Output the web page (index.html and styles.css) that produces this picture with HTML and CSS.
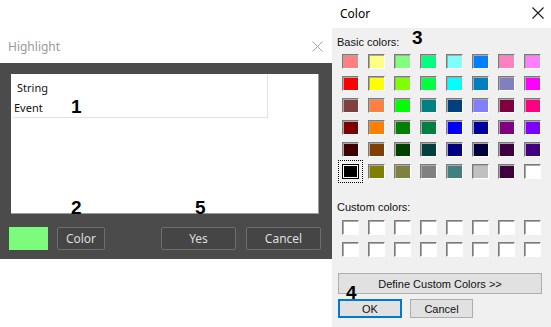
FILE: index.html
```html
<!DOCTYPE html>
<html lang="en">
<head>
  <meta charset="UTF-8" />
  <title>Highlight and Color</title>
  <link rel="stylesheet" href="styles.css">
</head>
<body>

  <div class="highlight">
    <div class="hl-title">
      <span>Highlight</span>
      <svg class="close" width="11" height="11" viewBox="0 0 11 11">
        <path d="M0.5 0.5 L10.5 10.5 M10.5 0.5 L0.5 10.5" stroke="#a4a4a4" stroke-width="1" fill="none"/>
      </svg>
    </div>
    <div class="hl-body">
      <div class="list">
        <div class="list-inner">
          <div class="row row-string">String</div>
          <div class="row">Event</div>
        </div>
      </div>
      <div class="hl-actions">
        <div class="current-color"></div>
        <button class="dark-btn color-btn">Color</button>
        <div class="spacer"></div>
        <button class="dark-btn wide">Yes</button>
        <button class="dark-btn wide">Cancel</button>
      </div>
    </div>
  </div>

  <div class="color-dialog">
    <div class="cd-title">
      <span>Color</span>
      <svg class="close-dark" width="12" height="12" viewBox="0 0 12 12">
        <path d="M0.5 0.5 L11.5 11.5 M11.5 0.5 L0.5 11.5" stroke="#1a1a1a" stroke-width="1.1" fill="none"/>
      </svg>
    </div>
    <div class="cd-body">
      <div class="label">Basic colors:</div>
      <div class="swatches" id="basic"></div>
      <div class="label custom-label">Custom colors:</div>
      <div class="swatches custom" id="custom"></div>
      <button class="win-btn define-btn">Define Custom Colors &gt;&gt;</button>
      <div class="cd-actions">
        <button class="win-btn ok-btn">OK</button>
        <button class="win-btn">Cancel</button>
      </div>
    </div>
  </div>

  <!-- callout numbers -->
  <span class="mark" id="m1">1</span>
  <span class="mark" id="m2">2</span>
  <span class="mark" id="m3">3</span>
  <span class="mark" id="m4">4</span>
  <span class="mark" id="m5">5</span>

  <script>
    const basic = [
      '#ff8080', '#ffff80', '#80ff80', '#00ff80', '#80ffff', '#0080ff', '#ff80c0', '#ff80ff',
      '#ff0000', '#ffff00', '#80ff00', '#00ff40', '#00ffff', '#0080c0', '#8080c0', '#ff00ff',
      '#804040', '#ff8040', '#00ff00', '#008080', '#004080', '#8080ff', '#800040', '#ff0080',
      '#800000', '#ff8000', '#008000', '#008040', '#0000ff', '#0000a0', '#800080', '#8000ff',
      '#400000', '#804000', '#004000', '#004040', '#000080', '#000040', '#400040', '#400080',
      '#000000', '#808000', '#808040', '#808080', '#408080', '#c0c0c0', '#400040', '#ffffff'
    ];

    const basicGrid = document.getElementById('basic');
    basic.forEach((c, i) => {
      const s = document.createElement('div');
      s.className = 'swatch';
      if (i === 40) s.classList.add('selected');
      s.style.background = c;
      basicGrid.appendChild(s);
    });

    const customGrid = document.getElementById('custom');
    for (let i = 0; i < 16; i++) {
      const s = document.createElement('div');
      s.className = 'swatch';
      customGrid.appendChild(s);
    }
  </script>

</body>
</html>
```

FILE: styles.css
```css
body {
  margin: 0;
  background: #ffffff;
  display: flex;
  align-items: flex-start;
  width: 551px;
  height: 327px;
  overflow: hidden;
  position: relative;
}

/* ---- Highlight dialog ---- */
.highlight {
  width: 332px;
  font-family: 'Noto Sans', 'Open Sans', sans-serif;
}

.hl-title {
  height: 63px;
  box-sizing: border-box;
  display: flex;
  align-items: flex-end;
  justify-content: space-between;
  padding: 0 9px 8px 8px;
  font-size: 12px;
  line-height: 16px;
  color: #9a9a9a;
}

.close {
  margin-bottom: 3px;
}

.hl-body {
  background: #4b4b4b;
  height: 196px;
  box-sizing: border-box;
  padding: 11px 11px 9px 9px;
}

.list {
  width: 308px;
  height: 140px;
  box-sizing: border-box;
  margin-left: 2px;
  background: #ffffff;
  border-right: 1px solid #9a9a9a;
  border-bottom: 1px solid #9a9a9a;
}

.list-inner {
  width: 255px;
  height: 44px;
  box-sizing: border-box;
  margin-left: 2px;
  padding-top: 4px;
  border-right: 1px solid #e2e2e2;
  border-bottom: 1px solid #e2e2e2;
  font-size: 11px;
  line-height: 20px;
  color: #111;
}

.row { padding-left: 1px; }
.row-string { padding-left: 4px; }

.hl-actions {
  display: flex;
  gap: 9px;
  margin-top: 13px;
  height: 23px;
}

.current-color {
  width: 39px;
  height: 23px;
  background: #7cfb7c;
}

.spacer { flex: 1; }

.dark-btn {
  height: 23px;
  width: 48px;
  box-sizing: border-box;
  background: #454545;
  border: 1px solid #6e6e6e;
  border-radius: 2px;
  color: #dedede;
  font-family: 'Noto Sans', 'Open Sans', sans-serif;
  font-size: 12px;
  padding: 0;
}

.dark-btn.wide {
  width: 75px;
  margin-left: 1px;
}

/* ---- Color dialog ---- */
.color-dialog {
  width: 219px;
  font-family: 'Liberation Sans', Arial, sans-serif;
}

.cd-title {
  height: 28px;
  box-sizing: border-box;
  display: flex;
  align-items: center;
  justify-content: space-between;
  padding: 0 7px 2px 8px;
  font-family: 'Noto Sans', 'Open Sans', sans-serif;
  font-size: 12px;
  color: #000;
}

.cd-body {
  background: #f0f0f0;
  height: 299px;
  box-sizing: border-box;
  padding: 7px 0 0 5px;
  font-size: 11px;
  color: #111;
}

.label {
  line-height: 14px;
}

.custom-label {
  margin-top: 21px;
}

.swatches {
  display: grid;
  grid-template-columns: repeat(8, 17px);
  column-gap: 9px;
  row-gap: 7px;
  margin-top: 5px;
  margin-left: 5px;
}

.swatches.custom {
  margin-top: 6px;
}

.swatch {
  width: 17px;
  height: 15px;
  box-sizing: border-box;
  background: #ffffff;
  border: 1px solid;
  border-color: #7a7a7a #ffffff #ffffff #7a7a7a;
  box-shadow: inset 1px 1px 0 #a8a8a8;
}

.swatch.selected {
  border: 1px solid #000;
  box-shadow: inset 0 0 0 1px #fff;
  outline: 1px dotted #000;
  outline-offset: 3px;
}

.win-btn {
  height: 19px;
  width: 63px;
  box-sizing: border-box;
  background: #e1e1e1;
  border: 1px solid #adadad;
  font-family: 'Liberation Sans', Arial, sans-serif;
  font-size: 11px;
  color: #111;
  padding: 0;
}

.define-btn {
  display: block;
  width: 204px;
  height: 21px;
  margin: 16px 0 0 1px;
}

.cd-actions {
  display: flex;
  gap: 8px;
  margin: 5px 0 0 1px;
}

.ok-btn {
  width: 64px;
  border: 2px solid #0078d7;
}

/* ---- callout numbers ---- */
.mark {
  position: absolute;
  font-family: 'Liberation Sans', Arial, sans-serif;
  font-weight: bold;
  font-size: 19px;
  line-height: 19px;
  color: #000;
}

#m1 { left: 71px; top: 97px; }
#m2 { left: 71px; top: 198px; }
#m3 { left: 412px; top: 28px; }
#m4 { left: 346px; top: 283px; }
#m5 { left: 195px; top: 198px; }
```
